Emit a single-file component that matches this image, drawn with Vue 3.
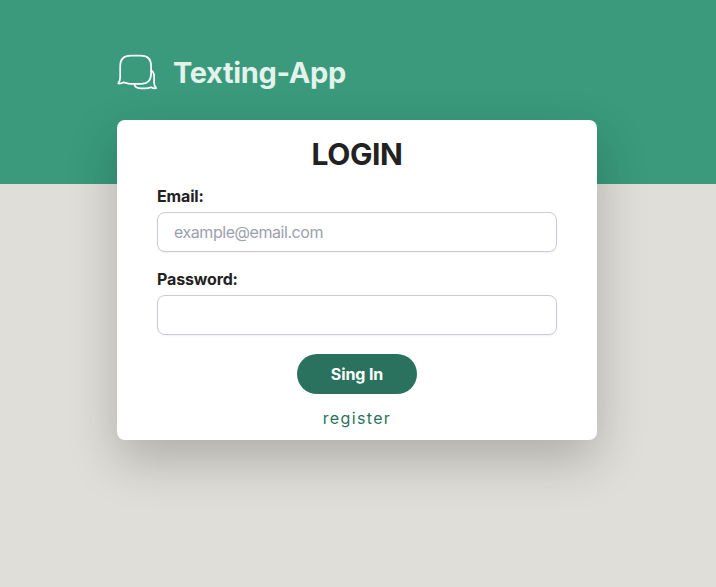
<script setup>
import { ref } from 'vue'

const email = ref('')
const password = ref('')
</script>

<template>
  <main class="page">
    <div class="column">
      <header class="brand">
        <svg class="logo" viewBox="0 0 40 40" aria-hidden="true">
          <path d="M14 3.7H23.5C30.8 3.7 34.1 7.2 34.1 14V21.2C34.1 28.2 30.5 31.8 23.8 31.8H13.5C10.3 31.8 8.5 30.6 6.7 30.3C4.9 31.3 3 31.8 1.2 31.5C2.9 29.6 3.2 27.5 3.2 25V14C3.2 7.2 6.8 3.7 14 3.7Z" />
          <path d="M34.2 18.4C36.5 19.5 37.1 21.4 37.1 24V30.8C37.1 33 37.7 34.7 39.1 36.2C37.2 36.5 35.6 36.1 33.9 35.2C32.2 36 30.5 36.4 28.4 36.4H23.8C20.4 36.4 18.1 35.1 17.1 32.3" />
        </svg>
        <h1 class="title">Texting-App</h1>
      </header>

      <form class="card" @submit.prevent>
        <h2 class="heading">LOGIN</h2>
        <label class="label" for="email">Email:</label>
        <input id="email" v-model="email" class="field" type="email" placeholder="example@email.com" />
        <label class="label second" for="password">Password:</label>
        <input id="password" v-model="password" class="field" type="password" />
        <button class="submit" type="submit">Sing In</button>
        <a class="register" href="#">register</a>
      </form>
    </div>
  </main>
</template>

<style>
body {
  margin: 0;
  background: #dfded9;
}
</style>

<style scoped>
.page {
  box-sizing: border-box;
  min-height: 100vh;
  display: flex;
  justify-content: center;
  padding: 48px 2px 0 0;
  background: linear-gradient(#3a9a7b 184px, #dfded9 184px);
  color: #222;
  font-family: Inter, "Liberation Sans", sans-serif;
  font-size: 16px;
  line-height: 24px;
}
.column {
  width: 480px;
}
.brand {
  display: flex;
  align-items: center;
  gap: 16px;
  height: 48px;
}
.logo {
  width: 40px;
  height: 40px;
  margin-bottom: 1px;
  fill: none;
  stroke: #fff;
  stroke-width: 1.7;
  stroke-linecap: round;
  stroke-linejoin: round;
}
.title {
  margin: 1px 0 0;
  color: #e3f3ec;
  font-size: 29px;
  font-weight: 700;
  line-height: 36px;
  letter-spacing: -0.35px;
}
.card {
  box-sizing: border-box;
  height: 320px;
  margin-top: 24px;
  padding: 16px 40px 0;
  display: flex;
  flex-direction: column;
  border-radius: 8px;
  background: #fff;
  box-shadow: 0 20px 50px rgba(0, 0, 0, 0.22);
}
.heading {
  margin: 0;
  text-align: center;
  font-size: 30px;
  font-weight: 700;
  line-height: 36px;
  letter-spacing: -0.4px;
}
.label {
  margin-top: 12px;
  font-weight: 700;
  letter-spacing: -0.15px;
}
.second {
  margin-top: 15px;
}
.field {
  box-sizing: border-box;
  width: 100%;
  height: 40px;
  margin-top: 4px;
  padding: 0 16px;
  border: 1px solid #cbcbd5;
  border-radius: 8px;
  outline: none;
  background: #fff;
  box-shadow: 0 1px 2px rgba(0, 0, 0, 0.06);
  color: inherit;
  font: inherit;
  letter-spacing: -0.45px;
}
.field::placeholder {
  color: #9ca0af;
  opacity: 1;
}
.submit {
  align-self: center;
  width: 120px;
  height: 40px;
  margin-top: 19px;
  padding: 0;
  border: 0;
  border-radius: 20px;
  background: #2a725e;
  color: #fff;
  font: inherit;
  font-weight: 700;
  letter-spacing: -0.1px;
}
.register {
  align-self: center;
  margin-top: 12px;
  color: #2a725e;
  letter-spacing: 1.35px;
  text-decoration: none;
}
</style>
